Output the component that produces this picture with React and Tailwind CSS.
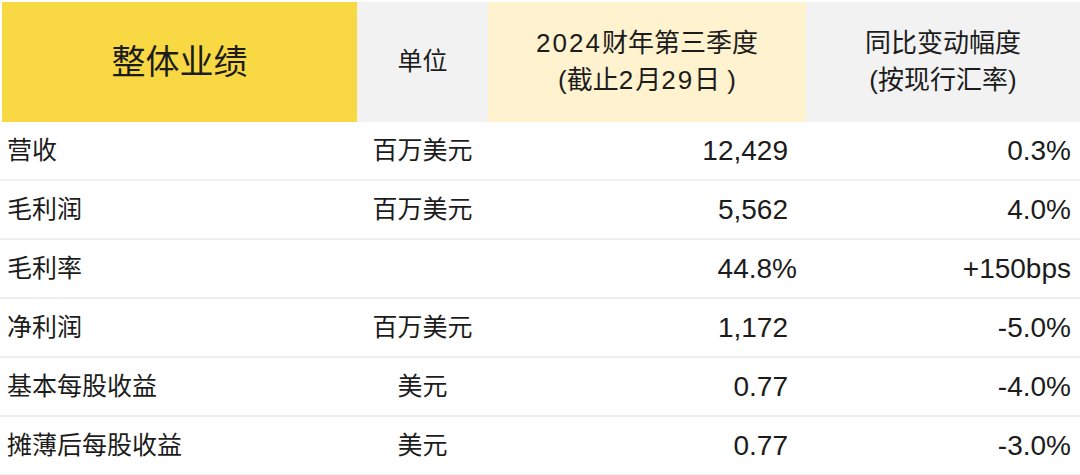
import React from "react"

const rows = [
  { name: "营收", unit: "百万美元", value: "12,429", change: "0.3%" },
  { name: "毛利润", unit: "百万美元", value: "5,562", change: "4.0%" },
  { name: "毛利率", unit: "", value: "44.8%", change: "+150bps", shift: true },
  { name: "净利润", unit: "百万美元", value: "1,172", change: "-5.0%" },
  { name: "基本每股收益", unit: "美元", value: "0.77", change: "-4.0%" },
  { name: "摊薄后每股收益", unit: "美元", value: "0.77", change: "-3.0%" },
]

const font = { fontFamily: '"Liberation Sans", "Noto Sans CJK SC", sans-serif' }

export default function App() {
  return (
    <div className="w-[1080px] h-[475px] overflow-hidden bg-white text-[#1c1c1c]" style={font}>
      {/* header */}
      <div className="grid grid-cols-[355px_131px_318px_274px] h-[122px] pt-[2px] pl-[2px]">
        <div className="bg-[#f8d944] flex items-center justify-center text-[34px]">整体业绩</div>
        <div className="bg-[#f2f2f2] flex items-center justify-center text-[25px]">单位</div>
        <div className="bg-[#fff2cf] flex flex-col items-center justify-center text-[26px] leading-[37px]">
          <div><span className="tracking-[2px]">2024</span>财年第三季度</div>
          <div>(截止<span className="tracking-[2px]">2</span>月<span className="tracking-[2px]">29</span>日 )</div>
        </div>
        <div className="bg-[#f2f2f2] flex flex-col items-center justify-center text-[26px] leading-[37px]">
          <div>同比变动幅度</div>
          <div>(按现行汇率)</div>
        </div>
      </div>

      {/* body */}
      {rows.map((r) => (
        <div
          key={r.name}
          className="grid grid-cols-[357px_131px_300px_292px] h-[59px] border-b-2 border-[#efefef] items-center text-[25px]"
        >
          <div className="pl-[7px]">{r.name}</div>
          <div className="text-center">{r.unit}</div>
          <div className={"text-right text-[28px] " + (r.shift ? "-mr-[9px]" : "")}>{r.value}</div>
          <div className="text-right pr-[9px] text-[28px]">{r.change}</div>
        </div>
      ))}
    </div>
  )
}
